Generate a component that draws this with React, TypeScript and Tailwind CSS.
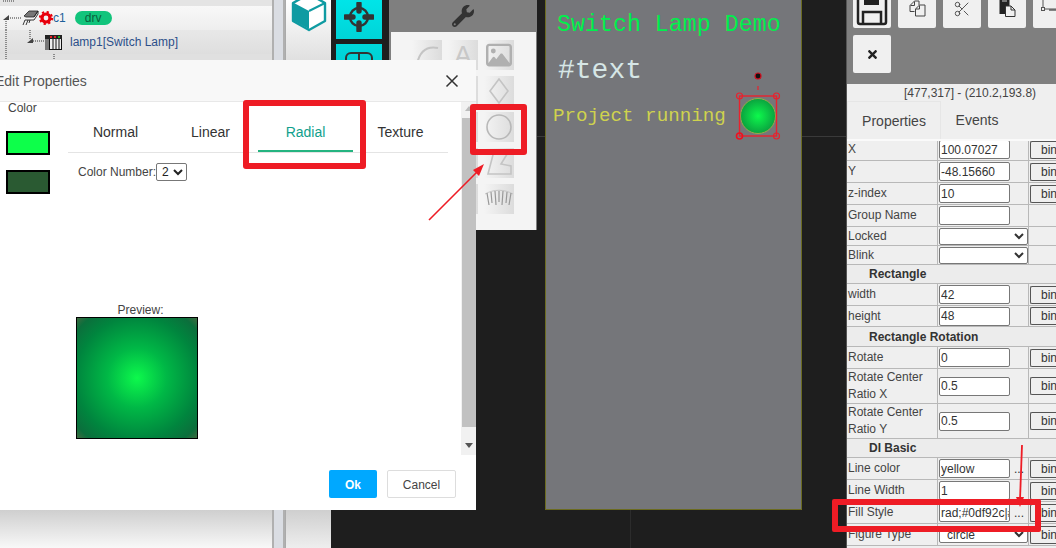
import React from 'react';
import { FaWrench, FaTimes } from 'react-icons/fa';
import { FaRegImage } from 'react-icons/fa6';
import { Scissors } from 'lucide-react';

type RowProps = {
  label: React.ReactNode;
  value?: string;
  kind?: 'input' | 'select';
  dots?: boolean;
  bind?: boolean;
  height: string;
};

const Row: React.FC<RowProps> = ({ label, value = '', kind = 'input', dots, bind = true, height }) => (
  <div className={`flex shrink-0 items-stretch border-b border-[#b8b8b8] ${height}`}>
    <div className="flex w-[91px] shrink-0 items-center border-r border-[#b8b8b8] pl-[1px] leading-[17px] text-[#444]">
      {label}
    </div>
    {kind === 'select' ? (
      <div className="flex w-[91px] shrink-0 items-center border-r border-[#b8b8b8] pl-px">
        <select
          defaultValue={value}
          className="h-[17px] w-[89px] rounded-[2px] border border-[#777] bg-white pl-[3px] text-[12px] text-[#333]"
        >
          <option value={value}>{value}</option>
        </select>
      </div>
    ) : (
      <>
        <div className="flex w-[72px] shrink-0 items-center pl-px">
          <input
            readOnly
            value={value}
            className="h-[19px] w-[71px] rounded-[2px] border border-[#777] bg-white pl-[1px] text-[12px] text-[#333]"
          />
        </div>
        <div className="flex w-[19px] shrink-0 items-center justify-center border-r border-[#b8b8b8] text-[#333]">
          {dots ? '...' : ''}
        </div>
      </>
    )}
    <div className="flex flex-1 items-center pl-px">
      {bind && (
        <button className="flex h-[18px] w-[26px] items-center rounded-l-[2px] border border-r-0 border-[#555] bg-[#efefef] pl-[10px] text-[#333]">
          bin
        </button>
      )}
    </div>
  </div>
);

const Section: React.FC<{ title: string; height: string }> = ({ title, height }) => (
  <div className={`flex shrink-0 items-center border-b border-[#b8b8b8] bg-[#ececec] pl-[22px] font-bold text-[#333] ${height}`}>
    {title}
  </div>
);

const ToolCell: React.FC<{ children?: React.ReactNode }> = ({ children }) => (
  <div className="flex h-[30px] w-[30px] items-center justify-center bg-gradient-to-r from-[#f4f4f4] to-[#dcdcdc]">
    {children}
  </div>
);

const ToolbarButton: React.FC<{ children?: React.ReactNode }> = ({ children }) => (
  <button className="flex h-[38px] w-[38px] shrink-0 items-start justify-center rounded-[2px] bg-[#f0f0f0] pt-[10px]">
    {children}
  </button>
);

const PropertiesPanel = () => (
  <div className="flex w-[210px] shrink-0 flex-col border-l border-[#555] bg-[#efefef] text-[12px]">
    <div className="flex h-[84px] shrink-0 flex-col gap-[7px] overflow-hidden bg-[#7f7f7f] pl-[6px]">
      <div className="-mt-[10px] flex gap-[7px]">
        <button className="flex h-[38px] w-[38px] shrink-0 items-end justify-center rounded-[2px] bg-[#f0f0f0]">
          <svg width="32" height="34" viewBox="0 0 32 34" className="mb-[2px]">
            <path d="M2 4 a2 2 0 0 1 2 -2 H25 L30 7 V30 a2 2 0 0 1 -2 2 H4 a2 2 0 0 1 -2 -2 Z" fill="none" stroke="#222" strokeWidth="2.5" />
            <rect x="8" y="2" width="15" height="11" fill="#222" />
            <path d="M7 32 V20 H25 V32" fill="none" stroke="#222" strokeWidth="2.5" />
          </svg>
        </button>
        <ToolbarButton>
          <svg width="17" height="17" viewBox="0 0 17 17">
            <path d="M5.5 11.5 H1 V5.5 L5.5 1 H10 V5" fill="none" stroke="#444" strokeWidth="1" />
            <path d="M5.5 1.5 V5.5 H1.5" fill="none" stroke="#444" strokeWidth="1" />
            <path d="M6.5 16 V9 L10.5 5 H16 V16 Z" fill="#f0f0f0" stroke="#444" strokeWidth="1" />
            <path d="M10.5 5.5 V9 H7" fill="none" stroke="#444" strokeWidth="1" />
          </svg>
        </ToolbarButton>
        <ToolbarButton>
          <Scissors size={18} strokeWidth={1.2} color="#444" />
        </ToolbarButton>
        <ToolbarButton>
          <svg width="17" height="17" viewBox="0 0 17 17">
            <rect x="0.5" y="0" width="10" height="14" fill="#222" />
            <rect x="3" y="0" width="5" height="2" fill="#777" />
            <path d="M6.5 16.5 V6 H12 L16 10 V16.5 Z" fill="#f0f0f0" stroke="#333" strokeWidth="1" />
            <path d="M12 6 V10 H16" fill="none" stroke="#333" strokeWidth="1" />
          </svg>
        </ToolbarButton>
        <ToolbarButton>
          <svg width="22" height="18" viewBox="0 0 22 18" className="-mt-[4px]">
            <rect x="2" y="2" width="14" height="11" fill="none" stroke="#555" />
            <rect x="0.5" y="0.5" width="3" height="3" fill="#eee" stroke="#555" />
            <rect x="14.5" y="0.5" width="3" height="3" fill="#eee" stroke="#555" />
            <rect x="0.5" y="11.5" width="3" height="3" fill="#eee" stroke="#555" />
            <path d="M8 14 H20" stroke="#555" strokeWidth="1.4" />
          </svg>
        </ToolbarButton>
      </div>
      <button className="flex h-[38px] w-[38px] shrink-0 items-center justify-center rounded-[2px] bg-[#f0f0f0] text-[#222]">
        <FaTimes size={13} />
      </button>
    </div>
    <div className="flex h-[17px] shrink-0 items-center justify-center pl-[37px] text-[#444]">[477,317] - (210.2,193.8)</div>
    <div className="flex h-[40px] shrink-0 border-b-2 border-b-[#fafafa] text-[14px] text-[#444]">
      <div className="flex w-[94px] items-center justify-center border-x border-t border-[#e6e6e6] pt-[1px]">Properties</div>
      <div className="flex w-[72px] items-center justify-center pt-[1px]">Events</div>
    </div>
    <div className="flex min-h-0 flex-1 flex-col overflow-hidden">
      <div className="-mt-[2px] flex flex-col">
        <Row height="h-[22px]" label="X" value="100.07027" />
        <Row height="h-[22px]" label="Y" value="-48.15660" />
        <Row height="h-[22px]" label="z-index" value="10" />
        <Row height="h-[22px]" label="Group Name" bind={false} />
        <Row height="h-[19px]" label="Locked" kind="select" bind={false} />
        <Row height="h-[19px]" label="Blink" kind="select" bind={false} />
        <Section height="h-[19px]" title="Rectangle" />
        <Row height="h-[22px]" label="width" value="42" />
        <Row height="h-[21px]" label="height" value="48" />
        <Section height="h-[20px]" title="Rectangle Rotation" />
        <Row height="h-[22px]" label="Rotate" value="0" />
        <Row height="h-[35px]" label="Rotate Center Ratio X" value="0.5" />
        <Row height="h-[35px]" label="Rotate Center Ratio Y" value="0.5" />
        <Section height="h-[19px]" title="DI Basic" />
        <Row height="h-[22px]" label="Line color" value="yellow" dots />
        <Row height="h-[22px]" label="Line Width" value="1" />
        <Row height="h-[22px]" label="Fill Style" value="rad;#0df92c|#2a5a32" dots />
        <Row height="h-[22px]" label="Figure Type" kind="select" value="circle" />
      </div>
    </div>
  </div>
);

const EditDialog = () => (
  <div className="absolute top-[60px] left-0 flex h-[450px] w-[476px] flex-col bg-white text-[12px] text-[#444]">
    <div className="flex h-[42px] shrink-0 items-center justify-between border-b border-[#e8e8e8] bg-[#f8f8f8] pt-[1px] pr-[17px] text-[14px] text-[#555]">
      <span className="-ml-[5px]">Edit Properties</span>
      <svg width="14" height="14" viewBox="0 0 14 14">
        <path d="M1.5 1.5 L12.5 12.5 M12.5 1.5 L1.5 12.5" stroke="#333" strokeWidth="1.5" />
      </svg>
    </div>
    <div className="flex h-[353px] shrink-0">
      <div className="w-[68px] shrink-0 pl-[8px]">
        <div className="leading-[12px]">Color</div>
        <div className="mt-[17px] -ml-[2px] h-[24px] w-[44px] border-2 border-black bg-[#0dff4a]" />
        <div className="mt-[15px] -ml-[2px] h-[24px] w-[44px] border-2 border-black bg-[#2a5a32]" />
      </div>
      <div className="w-[380px] shrink-0">
        <div className="mt-[16px] flex h-[35px] border-b border-[#e4e4e4] text-[14px] text-[#333]">
          <div className="flex w-[95px] items-center justify-center pb-[6px]">Normal</div>
          <div className="flex w-[95px] items-center justify-center pb-[6px]">Linear</div>
          <div className="flex w-[95px] items-center justify-center border-b-2 border-[#24b480] pb-[4px] text-[#119f8d]">Radial</div>
          <div className="flex w-[95px] items-center justify-center pb-[6px]">Texture</div>
        </div>
        <div className="mt-[10px] flex items-center pl-[10px]">
          <span>Color Number:</span>
          <select defaultValue="2" className="h-[18px] w-[31px] rounded-[2px] border border-[#777] bg-white pl-[1px] text-[12px] text-[#222]">
            <option value="2">2</option>
          </select>
        </div>
        <div className="mt-[120px] ml-[8px] w-[122px] pl-[7px] text-center">Preview:</div>
        <div className="-mt-[2px] ml-[8px] h-[122px] w-[122px] border border-black bg-[radial-gradient(circle,#0df94c_0%,#00b846_35%,#00853e_72%,#0b6f3c_90%,#3f6a40_100%)]" />
      </div>
      <div className="ml-[13px] flex w-[15px] shrink-0 flex-col items-center bg-[#f1f1f1]">
        <div className="mt-[4px] h-0 w-0 border-x-[4px] border-b-[5px] border-x-transparent border-b-[#bbb]" />
        <div className="mt-[7px] h-[309px] w-[14px] bg-[#c1c1c1]" />
        <div className="mt-[16px] h-0 w-0 border-x-[4px] border-t-[5px] border-x-transparent border-t-[#555]" />
      </div>
    </div>
    <div className="mt-[15px] flex justify-end gap-[10px] pr-[20px]">
      <button className="h-[28px] w-[48px] rounded-[2px] bg-[#00a8ff] pt-[1px] font-bold text-white">Ok</button>
      <button className="h-[28px] w-[69px] rounded-[2px] border border-[#ddd] bg-white pt-[1px] text-[#444]">Cancel</button>
    </div>
  </div>
);

const Annotations = () => (
  <>
    <div className="absolute top-[100px] left-[243px] h-[69px] w-[123px] rounded-[3px] border-[6px] border-[#ee1c25]" />
    <div className="absolute top-[104px] left-[470px] h-[51px] w-[57px] rounded-[3px] border-[6px] border-[#ee1c25]" />
    <div className="absolute top-[499px] left-[832px] h-[33px] w-[209px] rounded-[2px] border-[6px] border-[#ee1c25]" />
    <svg width="1056" height="548" className="pointer-events-none absolute top-0 left-0">
      <path d="M429 220 L480 169" stroke="#ee1c25" strokeWidth="1.6" />
      <path d="M484 164 L473 170 L479 176 Z" fill="#ee1c25" />
      <path d="M1022 445 L1020 500" stroke="#ee1c25" strokeWidth="1.8" />
      <path d="M1020 507 L1016 497 L1024 497 Z" fill="#ee1c25" />
    </svg>
  </>
);

export default function App() {
  return (
    <div className="relative flex h-[548px] w-[1056px] overflow-hidden bg-[#1e1e1e] font-['Liberation_Sans',Arial,sans-serif] text-[12px]">
      {/* Tree */}
      <div className="flex w-[272px] shrink-0 flex-col bg-[#e0e0e0] text-[#445]">
        <div className="h-[6px] shrink-0 bg-[#e4e4e4]">
          <svg width="20" height="6" className="block">
            <path d="M3 1 H15" stroke="#333" strokeDasharray="1 1" />
          </svg>
        </div>
        <div className="flex h-[24px] shrink-0 items-center bg-gradient-to-b from-[#f8f8f8] to-[#eeeeee]">
          <svg width="22" height="24" className="shrink-0">
            <path d="M10 12 H22 M6 15 V24" fill="none" stroke="#333" strokeDasharray="1 1" />
            <path d="M9 9 V14 H3 Z" fill="#444" />
          </svg>
          <svg width="17" height="16" viewBox="0 0 17 16" className="shrink-0">
            <path d="M2 6 L7 1 H16 L12 7 H4 Z" fill="#777" stroke="#222" strokeWidth="0.8" />
            <path d="M12 7 L16 1 V4 L12 10 H3 L1 15 M6 10 L4 15 M8 10 L7 13" fill="none" stroke="#222" strokeWidth="0.9" />
          </svg>
          <svg width="14" height="14" viewBox="0 0 14 14" className="shrink-0">
            <circle cx="7" cy="7" r="4" fill="none" stroke="#e8000c" strokeWidth="3.2" />
            <circle cx="7" cy="7" r="6" fill="none" stroke="#e8000c" strokeWidth="2.2" strokeDasharray="2.2 2.5" />
          </svg>
          <span className="text-[#1d5f9a]">c1</span>
          <span className="ml-[9px] flex h-[14px] w-[37px] items-center justify-center rounded-full bg-[#12c47c] text-[#0b5f3c]">drv</span>
        </div>
        <div className="flex h-[24px] shrink-0 items-center bg-gradient-to-b from-[#e8e8e8] to-[#dedede]">
          <svg width="45" height="24" className="shrink-0">
            <path d="M6 0 V24 M30 0 V9 M33 11 H45" fill="none" stroke="#333" strokeDasharray="1 1" />
            <path d="M33 8 V13 H27 Z" fill="#444" />
          </svg>
          <svg width="17" height="15" viewBox="0 0 17 15" className="shrink-0">
            <rect x="0.5" y="0.5" width="16" height="14" fill="#eee" stroke="#111" />
            <rect x="0" y="0" width="17" height="4" fill="#222" />
            <rect x="5" y="1" width="2" height="2" fill="#d22" />
            <rect x="9" y="1" width="2" height="2" fill="#d22" />
            <rect x="13" y="1" width="2" height="2" fill="#2a2" />
            <rect x="0" y="4" width="4" height="11" fill="#777" />
            <path d="M4.5 4 V15 M8 4 V15 M11 4 V15 M14 4 V15" stroke="#111" />
          </svg>
          <span className="ml-[8px] text-[#2c4f8a]">lamp1[Switch Lamp]</span>
        </div>
        <div className="h-[6px] shrink-0">
          <svg width="60" height="6" className="block">
            <path d="M6 0 V6 M54 0 V6" stroke="#333" strokeDasharray="1 1" />
          </svg>
        </div>
        <div className="mt-auto h-[38px] bg-gradient-to-b from-[#cfcfcf] to-[#f8f8f8]" />
      </div>
      <div className="w-[13px] shrink-0 border-x-2 border-x-[#b0b0b0] bg-[#dadde3]" />
      {/* Cube panel */}
      <div className="flex w-[46px] shrink-0 flex-col border-l border-[#aaa] bg-[#e0e0e0]">
        <div className="flex h-[60px] justify-center bg-gradient-to-b from-white to-[#e0e0e0]">
          <svg width="36" height="32" viewBox="0 0 36 32" className="shrink-0">
            <path d="M18 -6 L34 3 V21 L18 30 L2 21 V3 Z" fill="#fff" stroke="#0f9ba2" strokeWidth="2.4" strokeLinejoin="round" />
            <path d="M18 11 L3 3 V21 L18 29 Z" fill="#0f9ba2" />
            <path d="M34 3 L18 11" stroke="#0f9ba2" strokeWidth="2" />
          </svg>
        </div>
        <div className="mt-auto h-[38px] bg-gradient-to-b from-[#cfcfcf] to-[#eeeeee]" />
      </div>
      {/* Action strip */}
      <div className="flex w-[58px] shrink-0 flex-col gap-[5px] bg-[#1e1e1e] pl-[5px]">
        <div className="flex h-[39px] w-[46px] items-start justify-center bg-gradient-to-b from-[#00e5e8] to-[#00d4d8] pt-[2px]">
          <svg width="30" height="30" viewBox="0 0 30 30">
            <circle cx="15" cy="15" r="9" fill="none" stroke="#333" strokeWidth="2.4" />
            <path d="M15 1.5 V9 M15 21 V28.5 M1.5 15 H9 M21 15 H28.5" stroke="#333" strokeWidth="5.4" strokeLinecap="round" />
          </svg>
        </div>
        <div className="flex h-[39px] w-[46px] items-start justify-center bg-gradient-to-b from-[#00d8dc] to-[#00c8cc] pt-[8px]">
          <svg width="28" height="24" viewBox="0 0 28 24">
            <rect x="1" y="1" width="26" height="22" rx="5" fill="none" stroke="#333" strokeWidth="2" />
            <path d="M14 1 V8" stroke="#333" strokeWidth="2" />
          </svg>
        </div>
      </div>
      {/* Toolbox */}
      <div className="flex h-[230px] w-[148px] shrink-0 flex-col bg-[#7f7f7f]">
        <div className="flex h-[32px] shrink-0 items-center justify-center text-[#333]">
          <FaWrench size={22} />
        </div>
        <div className="ml-[2px] flex h-[198px] w-[145px] flex-col bg-[#f4f4f4] pt-[8px] pl-[21px]">
          <div className="grid grid-cols-[30px_30px_30px] gap-x-[6px] gap-y-[6px]">
            <ToolCell>
              <svg width="26" height="26" viewBox="0 0 26 26"><path d="M3 22 C6 8 14 4 24 6" fill="none" stroke="#c4c4c4" strokeWidth="2" /></svg>
            </ToolCell>
            <ToolCell>
              <span className="text-[26px] leading-none text-[#c8c8c8]">A</span>
            </ToolCell>
            <ToolCell>
              <span className="text-[#b0b0b0]"><FaRegImage size={26} /></span>
            </ToolCell>
            <ToolCell />
            <ToolCell />
            <ToolCell>
              <svg width="22" height="26" viewBox="0 0 22 26"><path d="M11 1 L20 13 L11 25 L2 13 Z" fill="none" stroke="#c4c4c4" strokeWidth="1.6" /></svg>
            </ToolCell>
            <ToolCell />
            <ToolCell />
            <ToolCell>
              <svg width="28" height="28" viewBox="0 0 28 28"><circle cx="14" cy="14" r="12" fill="none" stroke="#b8b8b8" strokeWidth="1.6" /></svg>
            </ToolCell>
            <ToolCell />
            <ToolCell />
            <ToolCell>
              <svg width="26" height="26" viewBox="0 0 26 26"><path d="M8 1 H23 L15 14 L25 16 V24 H2 Z" fill="none" stroke="#c4c4c4" strokeWidth="1.6" /></svg>
            </ToolCell>
            <ToolCell />
            <ToolCell />
            <ToolCell>
              <svg width="30" height="30" viewBox="0 0 30 30">
                <path d="M1 10 C10 5 20 5 29 10" fill="none" stroke="#bbb" strokeWidth="0.8" />
                <path d="M3 9 L5 21 M7 8 L8 19 M11 7 L12 21 M15 7 V18 M19 7 L18 21 M23 8 L22 19 M27 9 L25 21" stroke="#999" strokeWidth="1.2" />
              </svg>
            </ToolCell>
          </div>
        </div>
      </div>
      {/* Work area */}
      <div className="relative flex-1 pl-[8px]">
        <div className="absolute top-[136px] left-0 h-px w-full bg-[#3a3a3a]" />
        <div className="absolute top-0 left-[93px] h-full w-px bg-[#2c2c2c]" />
        <div className="relative h-[510px] w-[257px] border border-t-0 border-[#6b6b20] bg-[#75767a] font-['Liberation_Mono',monospace]">
          <div className="absolute top-[11px] left-[11px] text-[23.3px] leading-[28px] whitespace-nowrap text-[#00f04c]">Switch Lamp Demo</div>
          <div className="absolute top-[53px] left-[12px] text-[28px] leading-[36px] whitespace-nowrap text-[#d6e6e6]">#text</div>
          <div className="absolute top-[104px] left-[7px] text-[19.2px] leading-[24px] whitespace-nowrap text-[#cfd24e]">Project running</div>
          <svg width="60" height="80" viewBox="0 0 60 80" className="absolute top-[68px] left-[183px]">
            <defs>
              <radialGradient id="lamp">
                <stop offset="0" stopColor="#0df94c" />
                <stop offset="1" stopColor="#0aa23f" />
              </radialGradient>
            </defs>
            <circle cx="29" cy="48" r="17.5" fill="url(#lamp)" stroke="#9aa84a" strokeWidth="1" />
            <rect x="10.5" y="28" width="37" height="40" fill="none" stroke="#e8222e" strokeWidth="1.4" />
            <path d="M29 18 V22" stroke="#e8222e" strokeWidth="1.2" />
            <circle cx="29" cy="8" r="3" fill="#111" stroke="#d01020" strokeWidth="1.2" />
            <circle cx="10.5" cy="28" r="3" fill="none" stroke="#e8222e" strokeWidth="1.2" />
            <circle cx="47.5" cy="28" r="3" fill="none" stroke="#e8222e" strokeWidth="1.2" />
            <circle cx="10.5" cy="68" r="3" fill="none" stroke="#f01020" strokeWidth="1.6" />
            <circle cx="47.5" cy="68" r="3" fill="none" stroke="#e8222e" strokeWidth="1.2" />
          </svg>
        </div>
      </div>
      <PropertiesPanel />
      <EditDialog />
      <Annotations />
    </div>
  );
}
